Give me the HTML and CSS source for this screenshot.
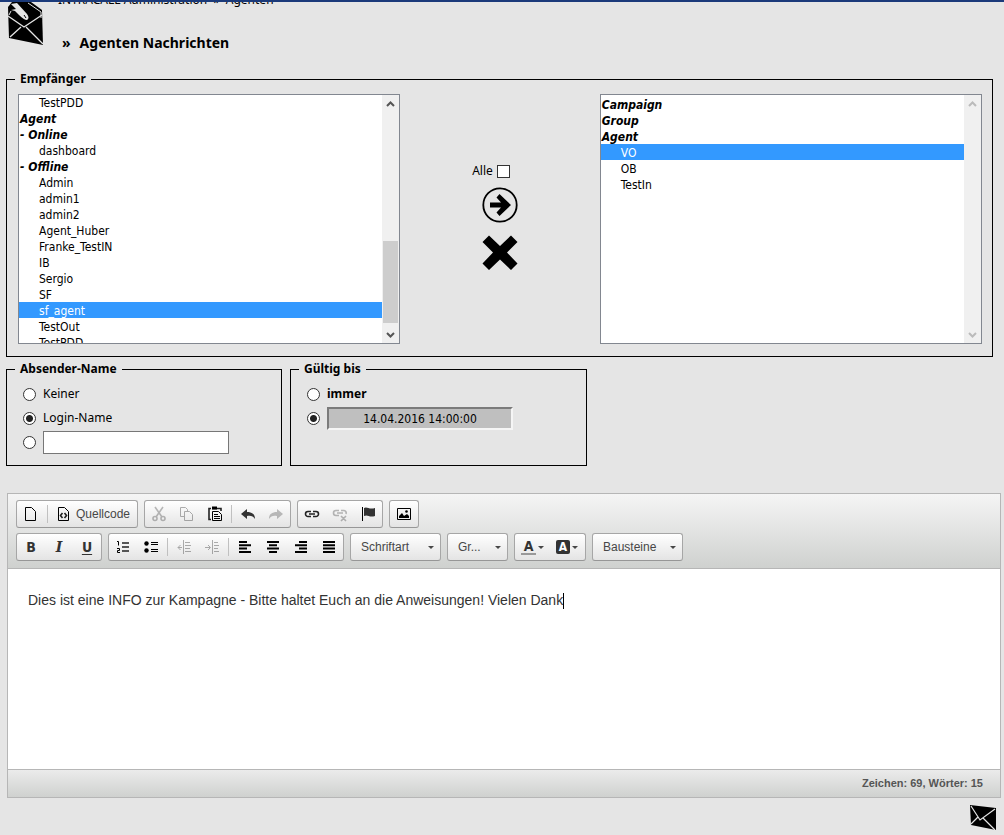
FILE: index.html
```html
<!DOCTYPE html>
<html lang="de">
<head>
<meta charset="utf-8">
<title>Agenten Nachrichten</title>
<link rel="stylesheet" href="styles.css">
</head>
<body>
<header class="header">
  <svg class="header-icon" viewBox="0 0 36 43" aria-hidden="true">
    <path d="M0 5L4 0H23L34 8L35 43L1 36Z" fill="#000"/>
    <path d="M0 14L16 25L34 13M2 35L13 25M18 25L35 42" fill="none" stroke="#e5e5e5" stroke-width="1.3"/>
    <path d="M3 2L9 1L19 12Q22 16 19 18Q16 18 11 13L7 9L3 8L8 7Z" fill="#e5e5e5"/>
    <path d="M20 1L33 10V16M3 9L1 13" fill="none" stroke="#e5e5e5"/>
    <path d="M16 13L18 16" stroke="#000"/>
  </svg>
  <div class="header-text">
    <nav class="crumbs">INTRACALL Administration &nbsp;»&nbsp; Agenten</nav>
    <h1 class="title"><span>»</span><span>Agenten Nachrichten</span></h1>
  </div>
</header>
<main>
<fieldset class="panel recipients">
  <legend>Empfänger</legend>
  <div class="recipients-grid">
    <div class="list">
      <select class="list-select list-scrolled" multiple size="15" aria-label="Verfügbare Empfänger">
        <option>TestPDD</option>
        <option class="head">Agent</option>
        <option class="head">- Online</option>
        <option>dashboard</option>
        <option class="head">- Offline</option>
        <option>Admin</option>
        <option>admin1</option>
        <option>admin2</option>
        <option>Agent_Huber</option>
        <option>Franke_TestIN</option>
        <option>IB</option>
        <option>Sergio</option>
        <option>SF</option>
        <option selected>sf_agent</option>
        <option>TestOut</option>
        <option>TestPDD</option>
      </select>
      <div class="scroll" aria-hidden="true">
        <svg viewBox="0 0 17 17"><path d="M5 11L8.500 7.500L12 11"/></svg>
        <div class="track"><div class="thumb"></div></div>
        <svg viewBox="0 0 17 17"><path d="M5 7L8.500 10.500L12 7"/></svg>
      </div>
    </div>
    <div class="transfer">
      <label class="all">Alle <input type="checkbox"></label>
      <button class="plain" type="button" aria-label="Hinzufügen">
        <svg width="36" height="36" viewBox="0 0 36 36"><circle cx="18" cy="18" r="16.700" fill="none" stroke="#000" stroke-width="1.800"/><path d="M8 15.500H19L14.500 10.500L17.500 7L29 18L17.500 29L14.500 25.500L19 20.500H8Z"/></svg>
      </button>
      <button class="plain" type="button" aria-label="Entfernen">
        <svg width="36" height="36" viewBox="0 0 36 36"><path d="M7 .500L18 11L29 .500L35.500 7L25 17.500L35.500 28.500L29 35L18 24.500L7 35L.500 28.500L11 17.500L.500 7Z"/></svg>
      </button>
    </div>
    <div class="list">
      <select class="list-select" multiple size="15" aria-label="Ausgewählte Empfänger">
        <option class="head">Campaign</option>
        <option class="head">Group</option>
        <option class="head">Agent</option>
        <option selected>VO</option>
        <option>OB</option>
        <option>TestIn</option>
      </select>
      <div class="scroll scroll-off" aria-hidden="true">
        <svg viewBox="0 0 17 17"><path d="M5 11L8.500 7.500L12 11"/></svg>
        <div class="track"></div>
        <svg viewBox="0 0 17 17"><path d="M5 7L8.500 10.500L12 7"/></svg>
      </div>
    </div>
  </div>
</fieldset>
<div class="options">
  <fieldset class="panel sender">
    <legend>Absender-Name</legend>
    <label class="choice"><input type="radio" name="sender">Keiner</label>
    <label class="choice"><input type="radio" name="sender" checked>Login-Name</label>
    <div class="choice"><input type="radio" name="sender" aria-label="Eigener Name"><input class="field" type="text" aria-label="Absender-Name"></div>
  </fieldset>
  <fieldset class="panel valid">
    <legend>Gültig bis</legend>
    <label class="choice strong"><input type="radio" name="valid">immer</label>
    <div class="choice"><input type="radio" name="valid" checked aria-label="Bis Datum"><input class="field date" type="text" value="14.04.2016 14:00:00" aria-label="Datum"></div>
  </fieldset>
</div>
<section class="editor">
  <div class="toolbar" role="toolbar">
    <div class="tool-row">
      <div class="group">
        <button type="button" aria-label="Neue Seite"><svg viewBox="0 0 16 16"><path class="l" d="M2.500 1.500H8.500L12.500 5.500V14.500H2.500Z"/></svg></button>
        <i class="sep"></i>
        <button type="button" class="text-tool"><svg viewBox="0 0 16 16"><path class="l" d="M2.500 1.500H8.500L12.500 5.500V14.500H2.500Z"/><path class="m" d="M6.500 7L4.500 9.500L6.500 12M8.500 7L10.500 9.500L8.500 12"/></svg>Quellcode</button>
      </div>
      <div class="group">
        <button type="button" disabled aria-label="Ausschneiden"><svg viewBox="0 0 16 16"><path class="m" d="M4 1L11 11M12 1L5 11"/><circle class="m" cx="4" cy="12.500" r="2"/><circle class="m" cx="12" cy="12.500" r="2"/></svg></button>
        <button type="button" disabled aria-label="Kopieren"><svg viewBox="0 0 16 16"><path class="l" d="M5.500 10.500H1.500V1.500H6.500L8.500 3.500V5M5.500 5.500H10.500L13.500 8.500V14.500H5.500Z"/></svg></button>
        <button type="button" aria-label="Einfügen"><svg viewBox="0 0 16 16"><path class="m" d="M4 2.500H2V13.500H4M11 2.500H14V5M5 2.500H11"/><path d="M5 .500H10V3.500H5Z"/><path class="l" d="M5.500 5.500H11.500L14.500 8.500V14.500H5.500ZM7 8.500H11M7 10.500H13M7 12.500H13"/></svg></button>
        <i class="sep"></i>
        <button type="button" aria-label="Rückgängig"><svg viewBox="0 0 16 16"><path class="g" d="M1 8L7 3V6C12 6 15 8 15 13C13 10 11 9.500 7 10V13Z"/></svg></button>
        <button type="button" disabled aria-label="Wiederherstellen"><svg viewBox="0 0 16 16"><path class="g" d="M15 8L9 3V6C4 6 1 8 1 13C3 10 5 9.500 9 10V13Z"/></svg></button>
      </div>
      <div class="group">
        <button type="button" aria-label="Link"><svg viewBox="0 0 16 16"><path class="m" d="M7 5.500H4A2.500 2.500 0 0 0 4 10.500H7M9 5.500H12A2.500 2.500 0 0 1 12 10.500H9M5 8H11"/></svg></button>
        <button type="button" disabled aria-label="Link entfernen"><svg viewBox="0 0 16 16"><path class="m" d="M7 4.500H4A2.500 2.500 0 0 0 4 9.500H7M9 4.500H12A2.500 2.500 0 0 1 14 8M5 7H11M9 10L14 15M14 10L9 15"/></svg></button>
        <button type="button" aria-label="Anker"><svg viewBox="0 0 16 16"><path class="l" d="M2.500 1V15"/><path class="g" d="M4 2C7 0 9 4 15 2V10C9 12 8 8 4 10Z"/></svg></button>
      </div>
      <div class="group">
        <button type="button" aria-label="Bild"><svg viewBox="0 0 16 16"><path class="l" d="M1.500 2.500H14.500V13.500H1.500Z"/><path d="M3 12V10L6 7L8 10L11 8L13 10V12Z"/><circle cx="10.500" cy="5.500" r="1.300"/></svg></button>
      </div>
    </div>
    <div class="tool-row">
      <div class="group">
        <button type="button" class="letter">B</button>
        <button type="button" class="letter italic">I</button>
        <button type="button" class="letter underline">U</button>
      </div>
      <div class="group">
        <button type="button" aria-label="Nummerierte Liste"><svg viewBox="0 0 16 16"><path class="m" d="M7 4H14M7 8H14M7 12H14"/><path class="l" d="M2 2.500H3.500V6.500M2 9.500H4.500V11.500H2.500V13.500H5"/></svg></button>
        <button type="button" aria-label="Liste"><svg viewBox="0 0 16 16"><circle cx="3.500" cy="4.500" r="2.200"/><circle cx="3.500" cy="11.500" r="2.200"/><path class="l" d="M8 3.500H15M8 5.500H15M8 10.500H15M8 12.500H15"/></svg></button>
        <i class="sep"></i>
        <button type="button" disabled aria-label="Einzug verkleinern"><svg viewBox="0 0 16 16"><path class="l" d="M7.500 1V15M9 3.500H14M9 6.500H15M9 9.500H14M9 12.500H15M2 8.500H6M4.500 6L2 8.500L4.500 11"/></svg></button>
        <button type="button" disabled aria-label="Einzug vergrößern"><svg viewBox="0 0 16 16"><path class="l" d="M8.500 1V15M10 3.500H14M10 6.500H15M10 9.500H14M10 12.500H15M1 8.500H6M4 6L6.500 8.500L4 11"/></svg></button>
        <i class="sep"></i>
        <button type="button" aria-label="Linksbündig"><svg viewBox="0 0 16 16"><path class="w" d="M2 3H10M2 6.300H14M2 9.600H10M2 13H14"/></svg></button>
        <button type="button" aria-label="Zentriert"><svg viewBox="0 0 16 16"><path class="w" d="M2 3H14M4 6.300H12M2 9.600H14M4 13H12"/></svg></button>
        <button type="button" aria-label="Rechtsbündig"><svg viewBox="0 0 16 16"><path class="w" d="M6 3H14M2 6.300H14M6 9.600H14M2 13H14"/></svg></button>
        <button type="button" aria-label="Blocksatz"><svg viewBox="0 0 16 16"><path class="w" d="M2 3H14M2 6.300H14M2 9.600H14M2 13H14"/></svg></button>
      </div>
      <div class="group wide"><button type="button" class="combo">Schriftart<i class="arrow"></i></button></div>
      <div class="group narrow"><button type="button" class="combo">Gr...<i class="arrow"></i></button></div>
      <div class="group colors">
        <button type="button" class="color" aria-label="Textfarbe"><span class="letter color-text">A</span><i class="arrow"></i></button>
        <button type="button" class="color" aria-label="Hintergrundfarbe"><span class="letter color-back">A</span><i class="arrow"></i></button>
      </div>
      <div class="group wide"><button type="button" class="combo">Bausteine<i class="arrow"></i></button></div>
    </div>
  </div>
  <div class="content" contenteditable="true" role="textbox" aria-multiline="true" aria-label="Nachricht">Dies ist eine INFO zur Kampagne - Bitte haltet Euch an die Anweisungen! Vielen Dank<span class="caret"></span></div>
  <div class="status">Zeichen: 69, Wörter: 15</div>
</section>
</main>
<footer class="footer">
  <button class="plain" type="button" aria-label="Senden">
    <svg width="26" height="26" viewBox="0 0 26 26"><path d="M0 0L26 3V25L1 20Z"/><path d="M1 1L10 15L25 4M8 12L1 19M13 13L25 25" fill="none" stroke="#e5e5e5" stroke-width="1.200"/></svg>
  </button>
</footer>
</body>
</html>
```
FILE: styles.css
```css
* { box-sizing: border-box; }
body {
  margin: 0;
  background: #e5e5e5;
  color: #000;
  font: 12px/16px "Noto Sans", "Open Sans", sans-serif;
}
button, input, select { font: inherit; color: inherit; }
svg { display: block; }

.header {
  display: flex;
  gap: 14px;
  height: 72px;
  padding-left: 8px;
  border-top: 2px solid #1b3a7a;
  overflow: hidden;
}
.header-icon { width: 36px; height: 43px; }
.crumbs { margin-top: -11px; line-height: 18px; }
.title {
  display: flex;
  gap: 9px;
  margin: 24px 0 0 4px;
  font-size: 14px;
  line-height: 20px;
}

.panel {
  margin: 0;
  min-width: 0;
  padding: 0 11px 12px;
  border: 1px solid #000;
}
.panel legend { margin-left: -3px; padding: 0 5px; font-weight: bold; line-height: 14px; }
.recipients { margin: 0 11px 5px 6px; padding-right: 10px; padding-bottom: 12px; }
.recipients-grid {
  display: grid;
  grid-template-columns: 23fr 12fr 23fr;
  padding-top: 8px;
}
.list {
  display: flex;
  height: 250px;
  border: 1px solid #828790;
  background: #fff;
  overflow: hidden;
}
.list-select {
  flex: 1;
  min-width: 0;
  height: 248px;
  margin: 0;
  padding: 1px 0 0;
  border: 0;
  border-radius: 0;
  outline: 0;
  background: #fff;
  font-family: "DejaVu Sans Condensed", "DejaVu Sans", sans-serif;
  overflow: hidden;
}
.list-scrolled { height: 249px; margin-top: -1px; padding-top: 0; }
.list-select option {
  height: 16px;
  min-height: 16px;
  padding: 2px 0 0 20px;
  line-height: 14px;
  color: #000;
}
.list-select .head { padding-left: 1px; font-weight: bold; font-style: italic; }
.list-scrolled option { padding-top: 2px; }
.list-select option:checked {
  background: #39f linear-gradient(#39f, #39f);
  color: #fff;
}
.scroll {
  display: flex;
  flex-direction: column;
  width: 17px;
  background: #f0f0f0;
}
.scroll svg { width: 17px; height: 17px; fill: none; stroke: #555; stroke-width: 2; }
.scroll-off svg { stroke: #bbb; }
.track { display: flex; flex: 1; align-items: flex-end; padding: 0 1px 3px; }
.thumb { width: 100%; height: 39%; background: #cdcdcd; }

.transfer { display: flex; flex-direction: column; align-items: center; padding-top: 69px; }
.all { display: flex; align-items: center; gap: 4px; margin-bottom: 8px; padding-right: 18px; }
.all input {
  appearance: none;
  width: 13px;
  height: 13px;
  margin: 0;
  border: 1px solid #333;
  background: #fff;
}
.plain { padding: 0; border: 0; background: none; }
.transfer .plain { margin-bottom: 12px; }

.options { display: flex; align-items: stretch; gap: 8px; margin: 0 6px 27px; }
.options .panel { padding: 6px 16px 11px; }
.sender { width: 276px; }
.valid { width: 297px; }
.options legend { margin-left: -8px; }
.choice { display: flex; align-items: center; gap: 7px; height: 24px; }
.strong { font-weight: bold; }
.choice input[type="radio"] {
  appearance: none;
  width: 13px;
  height: 13px;
  margin: 0;
  border: 1px solid #333;
  border-radius: 50%;
  background: #fff;
}
.choice input[type="radio"]:checked { background: radial-gradient(circle, #222 0 3px, #fff 4px); }
.field { width: 186px; height: 23px; margin: 0; padding: 0 4px; border: 1px solid #777; background: #fff; }
.date {
  padding-top: 2px;
  border: 2px solid;
  border-color: #7b7b7b #f5f5f5 #f5f5f5 #7b7b7b;
  background: #bfbfbf;
  text-align: center;
  font-family: "DejaVu Sans Condensed", "DejaVu Sans", sans-serif;
}

.editor {
  margin: 0 3px 0 7px;
  border: 1px solid #b6b6b6;
  background: #fff;
  font-family: "Liberation Sans", Arial, sans-serif;
}
.toolbar {
  display: flex;
  flex-direction: column;
  gap: 5px;
  padding: 6px 8px 7px;
  border-bottom: 1px solid #b6b6b6;
  background: linear-gradient(#f5f5f5, #cfd1cf);
}
.tool-row { display: flex; flex-wrap: wrap; gap: 6px; }
.group {
  display: flex;
  align-items: center;
  height: 28px;
  border: 1px solid #a6a6a6;
  border-bottom-color: #979797;
  border-radius: 3px;
  background: linear-gradient(#fff, #e4e4e4);
}
.group button {
  display: flex;
  align-items: center;
  height: 26px;
  padding: 0 6px;
  border: 0;
  background: none;
  color: #474747;
}
.group svg { width: 16px; height: 16px; }
.group button:disabled { opacity: 0.3; }
.group .text-tool { gap: 4px; padding-right: 7px; }
.sep { width: 1px; height: 18px; margin: 0 2px; background: #c0c0c0; }
.l, .m, .w { fill: none; stroke: #000; stroke-width: 1; }
.m { stroke: #222; stroke-width: 1.6; }
.w { stroke-width: 2; }
.g { fill: #333; }
.group .letter {
  justify-content: center;
  width: 28px;
  color: #333;
  font: bold 14px/16px "DejaVu Sans Condensed", "DejaVu Sans", sans-serif;
}
.group .italic { font-family: "DejaVu Serif", serif; font-style: italic; }
.group .underline { text-decoration: underline; text-underline-offset: 2px; }
.group .combo { flex: 1; justify-content: space-between; padding: 0 6px 0 10px; }
.wide { width: 91px; }
.narrow { width: 61px; }
.colors { width: 72px; }
.arrow { border: 3px solid transparent; border-top-color: #474747; border-bottom: 0; }
.group .color { gap: 2px; padding: 0 6px; }
.group .color-text { width: 15px; border-bottom: 2px solid #999; line-height: 14px; }
.group .color-back { width: 14px; border-radius: 2px; background: #333; color: #fff; font-size: 12px; line-height: 14px; }
.content {
  height: 200px;
  padding: 20px;
  outline: 0;
  color: #333;
  font-size: 14px;
  line-height: 22px;
}
.caret { display: inline-block; width: 1px; height: 16px; background: #000; vertical-align: middle; }
.status {
  padding: 5px 17px 6px;
  border-top: 1px solid #b6b6b6;
  background: linear-gradient(#ebebeb, #cfd1cf);
  color: #555;
  font-size: 11px;
  font-weight: bold;
  text-align: right;
}
.footer { display: flex; justify-content: flex-end; padding: 7px 8px 0; }
```
